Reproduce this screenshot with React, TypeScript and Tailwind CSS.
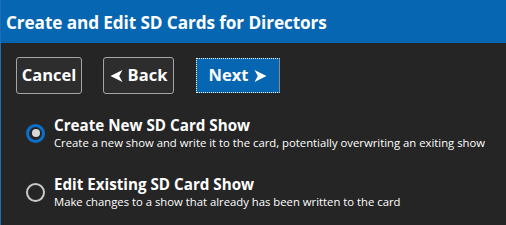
import React from "react";

const Arrow = ({ dir }: { dir: "left" | "right" }) => (
  <svg width="13" height="12" viewBox="0 0 13 12" className="inline-block">
    {dir === "right" ? (
      <path d="M0.5 0 L12.5 6 L0.5 12 L3.8 6 Z" fill="white" />
    ) : (
      <path d="M12.5 0 L0.5 6 L12.5 12 L9.2 6 Z" fill="white" />
    )}
  </svg>
);

const Radio = ({ checked }: { checked: boolean }) =>
  checked ? (
    <div className="w-[19px] h-[19px] rounded-full border-[3px] border-[#0a70c9] flex items-center justify-center shrink-0">
      <div className="w-[8px] h-[8px] rounded-full bg-[#d8d8d8]" />
    </div>
  ) : (
    <div className="w-[19px] h-[19px] rounded-full border-2 border-[#c8c8c8] shrink-0" />
  );

export default function App() {
  return (
    <div
      className="w-[506px] h-[225px] bg-[#252525] border-l border-[#1b6fb8] flex flex-col text-white overflow-hidden"
      style={{ fontFamily: '"Open Sans", "Noto Sans", sans-serif' }}
    >
      <div className="h-[43px] bg-[#0766b2] flex items-center pl-[5px] pt-[3px]">
        <span className="text-[17.2px] font-bold tracking-[-0.1px]">Create and Edit SD Cards for Directors</span>
      </div>
      <div className="flex items-center pl-[15px] pt-[14px] gap-[21px]">
        <button className="h-[37px] w-[66px] rounded-[3px] border border-[#a5a5a5] bg-[#2d2d2d] text-[16.5px] font-bold flex items-center justify-center">
          Cancel
        </button>
        <button className="h-[37px] w-[71px] rounded-[3px] border border-[#a5a5a5] bg-[#2d2d2d] text-[16.5px] font-bold flex items-center justify-center gap-[5px]">
          <Arrow dir="left" />
          Back
        </button>
        <button className="h-[35px] w-[84px] ml-[1px] bg-[#0766b2] border border-dotted border-white [border-right-style:solid] border-r-[#8a8a8a] text-[16.5px] font-bold flex items-center justify-center gap-[6px]">
          Next
          <Arrow dir="right" />
        </button>
      </div>
      <div className="flex flex-col pl-[25px] pt-[21px] gap-[23px]">
        <div className="flex items-center gap-[9px]">
          <Radio checked />
          <div className="flex flex-col">
            <span className="text-[15.2px] font-bold leading-[20px]">Create New SD Card Show</span>
            <span className="text-[11.3px] leading-[16px]">Create a new show and write it to the card, potentially overwriting an exiting show</span>
          </div>
        </div>
        <div className="flex items-center gap-[9px]">
          <Radio checked={false} />
          <div className="flex flex-col">
            <span className="text-[15.2px] font-bold leading-[20px]">Edit Existing SD Card Show</span>
            <span className="text-[11.3px] leading-[16px]">Make changes to a show that already has been written to the card</span>
          </div>
        </div>
      </div>
    </div>
  );
}
